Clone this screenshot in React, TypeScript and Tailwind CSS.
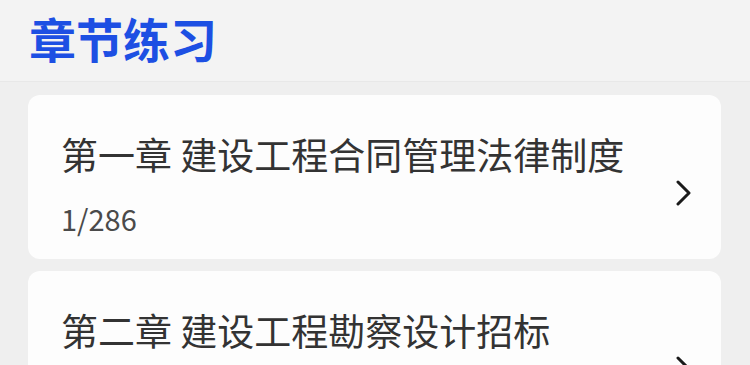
const chapters = [
  { title: "第一章 建设工程合同管理法律制度", progress: "1/286" },
  { title: "第二章 建设工程勘察设计招标", progress: "0/120" },
];

function Chevron() {
  return (
    <svg width="18" height="26" viewBox="0 0 18 26" fill="none" className="mt-[20px] shrink-0">
      <polyline points="3,2 14,13 3,24" stroke="#1a1a1a" strokeWidth="3" strokeLinecap="round" strokeLinejoin="round" />
    </svg>
  );
}

export default function App() {
  return (
    <div
      className="h-[365px] w-[750px] overflow-hidden bg-[#efefef]"
      style={{ fontFamily: '"Noto Sans CJK SC", "Noto Sans", sans-serif' }}
    >
      <div className="h-[82px] border-b border-[#e8e8e8] bg-[#f3f3f3] pl-[29px] pt-[10px]">
        <h1 className="text-[47px] font-bold leading-[56px] text-[#1d4fe3]">章节练习</h1>
      </div>

      <div className="flex flex-col gap-[12px] pl-[28px] pr-[29px] pt-[13px]">
        {chapters.map((c) => (
          <div key={c.title} className="flex items-center rounded-[12px] bg-[#fdfdfd] pb-[23px] pl-[33px] pr-[28px] pt-[35px]">
            <div className="flex flex-1 flex-col gap-[22px]">
              <p className="text-[37px] leading-[48px] text-[#333333]">{c.title}</p>
              <p className="text-[29px] leading-[36px] text-[#4a4a4a]">{c.progress}</p>
            </div>
            <Chevron />
          </div>
        ))}
      </div>
    </div>
  );
}
